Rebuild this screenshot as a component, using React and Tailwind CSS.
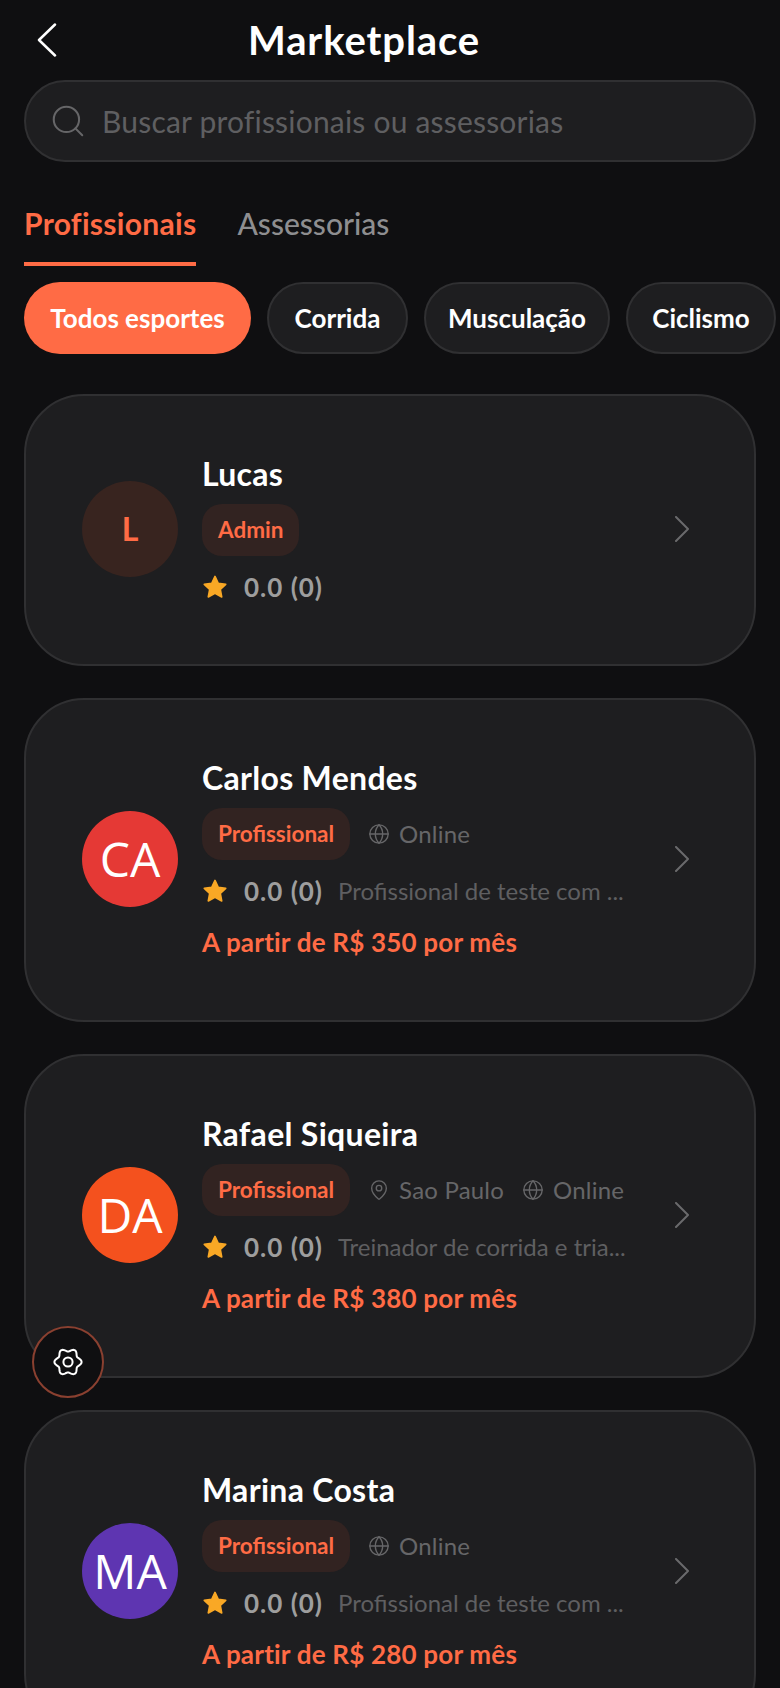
import React from 'react';
import { Globe, MapPin, Search } from 'lucide-react';

const font = 'font-["Lato","Noto_Sans",sans-serif]';

const sports = [
  { label: 'Todos esportes', width: 'w-[227px]', active: true },
  { label: 'Corrida', width: 'w-[141px]' },
  { label: 'Musculação', width: 'w-[186px]' },
  { label: 'Ciclismo', width: 'w-[150px]' },
];

const people = [
  { name: 'Lucas', role: 'Admin', initials: 'L', avatar: 'bg-[#38241f] text-[#ff6b45]', soft: true },
  {
    name: 'Carlos Mendes',
    role: 'Profissional',
    initials: 'CA',
    avatar: 'bg-[#e53935] text-white',
    online: true,
    bio: 'Profissional de teste com ...',
    price: 'A partir de R$ 350 por mês',
  },
  {
    name: 'Rafael Siqueira',
    role: 'Profissional',
    initials: 'DA',
    avatar: 'bg-[#f4511e] text-white',
    city: 'Sao Paulo',
    online: true,
    bio: 'Treinador de corrida e tria...',
    price: 'A partir de R$ 380 por mês',
  },
  {
    name: 'Marina Costa',
    role: 'Profissional',
    initials: 'MA',
    avatar: 'bg-[#5e35b1] text-white',
    online: true,
    bio: 'Profissional de teste com ...',
    price: 'A partir de R$ 280 por mês',
  },
];

// six soft lobes, the gear in the reference has no hard teeth
const gearPath =
  Array.from({ length: 73 }, (_, i) => {
    const angle = (i / 72) * Math.PI * 2;
    const radius = 12 + 1.6 * Math.cos(6 * angle);
    const x = 15 + radius * Math.cos(angle);
    const y = 15 + radius * Math.sin(angle);
    return `${i === 0 ? 'M' : 'L'}${x.toFixed(2)} ${y.toFixed(2)}`;
  }).join(' ') + 'Z';

const StarIcon = () => (
  <svg width="26" height="26" viewBox="0 0 24 24" className="shrink-0">
    <path
      d="M12 2.2l3 6.4 6.9.9-5 4.8 1.3 6.9-6.2-3.4-6.2 3.4 1.3-6.9-5-4.8 6.9-.9z"
      fill="#f9a825"
      stroke="#f9a825"
      strokeWidth="1.5"
      strokeLinejoin="round"
    />
  </svg>
);

const PersonCard = ({ person }) => (
  <div className="flex items-center rounded-[60px] border-2 border-[#303032] bg-[#1e1e20] pb-[59px] pl-[56px] pr-[64px] pt-[56px]">
    <div
      className={`flex h-[96px] w-[96px] shrink-0 items-center justify-center rounded-full ${person.avatar} ${
        person.soft ? 'text-[32px] font-bold' : 'font-["Open_Sans",sans-serif] text-[48px]'
      }`}
    >
      {person.initials}
    </div>
    <div className="ml-[24px] flex min-w-0 flex-1 flex-col">
      <div className="h-[46px] text-[32px] font-bold leading-[44px] tracking-[0.3px] text-white">{person.name}</div>
      <div className="mt-[6px] flex h-[52px] items-center">
        <span className="flex h-[52px] items-center rounded-[20px] bg-[#322321] px-[16px] text-[22.5px] font-bold text-[#ff6b45]">
          {person.role}
        </span>
        {person.city && (
          <span className="ml-[18px] flex items-center text-[24px] tracking-[0.2px] text-[#666668]">
            <MapPin size={22} strokeWidth={1.5} className="mr-[9px]" />
            {person.city}
          </span>
        )}
        {person.online && (
          <span className="ml-[18px] flex items-center text-[24px] tracking-[0.2px] text-[#666668]">
            <Globe size={22} strokeWidth={1.5} className="mr-[9px]" />
            Online
          </span>
        )}
      </div>
      <div className="mt-[13px] flex h-[36px] items-center">
        <StarIcon />
        <span className="ml-[16px] shrink-0 text-[26px] font-bold tracking-[1px] text-[#9e9e9e]">0.0 (0)</span>
        {person.bio && <span className="ml-[15px] truncate text-[24px] text-[#5f5f61]">{person.bio}</span>}
      </div>
      {person.price && (
        <div className="mt-[16px] h-[36px] text-[26px] font-bold leading-[35px] tracking-[0.2px] text-[#ff6b45]">
          {person.price}
        </div>
      )}
    </div>
    <svg width="16" height="26" viewBox="0 0 16 26" fill="none" className="ml-[20px] shrink-0">
      <path d="M2 1l12 12L2 25" stroke="#6a6a6c" strokeWidth="2" strokeLinecap="round" strokeLinejoin="round" />
    </svg>
  </div>
);

const App = () => {
  return (
    <div className={`relative h-[1688px] w-[780px] overflow-hidden bg-[#0f0f11] px-[24px] ${font}`}>
      <header className="relative flex h-[80px] items-center justify-center pr-[52px]">
        <svg width="22" height="34" viewBox="0 0 22 34" fill="none" className="absolute left-[12px] top-[23px]">
          <path d="M19 1.5L3 17l16 15.5" stroke="#ffffff" strokeWidth="2.5" strokeLinecap="round" strokeLinejoin="round" />
        </svg>
        <h1 className="text-[40px] font-bold tracking-[0.9px] text-white">Marketplace</h1>
      </header>

      <div className="flex h-[82px] items-center rounded-full border-2 border-[#303032] bg-[#1e1e20] pl-[23px]">
        <Search size={38} strokeWidth={1.3} className="text-[#666668]" />
        <span className="ml-[15px] text-[30px] tracking-[0.2px] text-[#5f5f61]">Buscar profissionais ou assessorias</span>
      </div>

      <div className="mt-[40px] flex h-[64px] gap-[41px]">
        <div className="h-[64px] border-b-4 border-[#ff6b45] text-[30px] font-bold leading-[42px] tracking-[0.3px] text-[#ff6b45]">
          Profissionais
        </div>
        <div className="text-[30px] font-medium leading-[42px] text-[#8e8e90]">Assessorias</div>
      </div>

      <div className="mt-[16px] flex gap-[16px]">
        {sports.map((sport) => (
          <div
            key={sport.label}
            className={`flex h-[72px] shrink-0 items-center justify-center rounded-full text-[26px] font-bold text-white ${sport.width} ${
              sport.active ? 'bg-[#ff6b45]' : 'border-2 border-[#303032] bg-[#1e1e20]'
            }`}
          >
            {sport.label}
          </div>
        ))}
      </div>

      <div className="mt-[40px] flex flex-col gap-[32px]">
        {people.map((person) => (
          <PersonCard key={person.name} person={person} />
        ))}
      </div>

      <button className="absolute left-[32px] top-[1326px] flex h-[72px] w-[72px] items-center justify-center rounded-full border-2 border-[#8a4030] bg-[#0f0f11]">
        <svg width="30" height="30" viewBox="0 0 30 30" fill="none" stroke="#ffffff" strokeWidth="2" strokeLinejoin="round">
          <path d={gearPath} />
          <circle cx="15" cy="15" r="4.6" />
        </svg>
      </button>
    </div>
  );
};

export default App;
